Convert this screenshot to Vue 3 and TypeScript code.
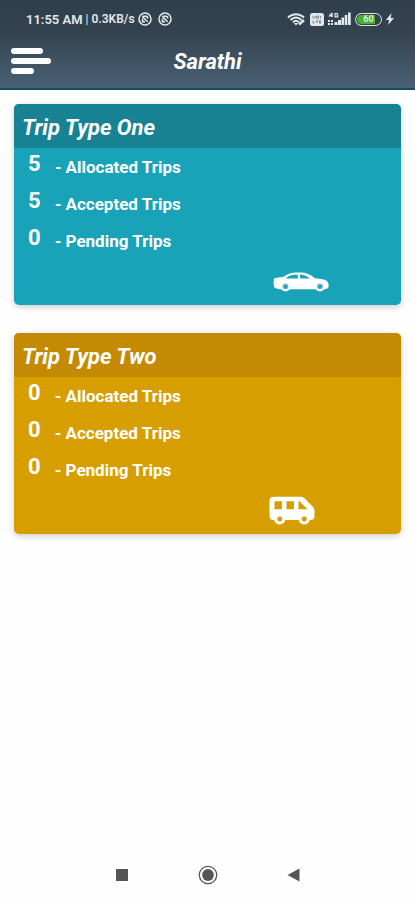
<script setup lang="ts">
interface TripCard {
  id: string
  title: string
  vehicle: 'car' | 'van'
  rows: { count: number; label: string }[]
}

const cards: TripCard[] = [
  {
    id: 'one',
    title: 'Trip Type One',
    vehicle: 'car',
    rows: [
      { count: 5, label: 'Allocated Trips' },
      { count: 5, label: 'Accepted Trips' },
      { count: 0, label: 'Pending Trips' },
    ],
  },
  {
    id: 'two',
    title: 'Trip Type Two',
    vehicle: 'van',
    rows: [
      { count: 0, label: 'Allocated Trips' },
      { count: 0, label: 'Accepted Trips' },
      { count: 0, label: 'Pending Trips' },
    ],
  },
]
</script>

<template>
  <div class="screen">
    <header class="top">
      <div class="status">
        <div class="status-group">
          <span class="time">11:55 AM</span>
          <span class="divider">|</span>
          <span class="speed">0.3KB/s</span>
          <svg v-for="n in 2" :key="n" class="round" viewBox="0 0 14 14" aria-hidden="true">
            <circle cx="7" cy="7" r="6" fill="none" stroke="currentColor" stroke-width="1.500" />
            <path d="M4.500 4.200h3.500a1.800 1.800 0 0 1 1.500 2.400M4.300 4.500l5.300 5.300M4.500 6.800v3h2.500" fill="none" stroke="currentColor" stroke-width="1.600" />
          </svg>
        </div>
        <div class="status-group right">
          <svg class="wifi" viewBox="0 0 19 14" aria-hidden="true">
            <path d="M1 5.500C5.500 1 12.500 1 17 5.500M3.500 8C7 4.500 11 4.500 14.500 8M6 10.300c2-2 4-2 6 0" fill="none" stroke="currentColor" stroke-width="2" />
            <path d="M9 13.500l-2.200-2.400h4.400z" fill="currentColor" />
            <path d="M12 12.500l5-4.500" stroke="currentColor" stroke-width="2.500" />
          </svg>
          <svg class="volte" viewBox="0 0 14 13" aria-hidden="true">
            <rect width="14" height="13" rx="2.500" fill="currentColor" />
            <path d="M3 3v1.500l1 1 1-1V3M6.500 3h2v2.300h-2zM10.500 3v2.500M3 7.500V10h1.700M6 7.800h2M7 7.800V10M11 7.800H9.500V10H11M9.500 9H11" fill="none" stroke="#66727d" stroke-width=".8" />
          </svg>
          <svg class="signal" viewBox="0 0 23 14" aria-hidden="true">
            <path d="M4 1v4M4 1L1.500 4H5M10 1.500H7v3.300h2.700V3.200H8.500" fill="none" stroke="currentColor" stroke-width="1.200" />
            <path d="M0 8h2v2H0zM3 8h2v2H3zM0 11h2v2H0zM3 11h2v2H3zM6.500 10h3v3h-3zM10 8h3v5h-3zM13.500 5.500h2.500V13h-2.500zM16.700 3h2.600v10h-2.600zM20 .5h2.700V13H20z" fill="currentColor" />
          </svg>
          <span class="battery">60</span>
          <svg class="bolt" viewBox="0 0 8 12" aria-hidden="true">
            <path d="M5.500 0L0 7h3.200L2 12l6-7H4.700z" fill="currentColor" />
          </svg>
        </div>
      </div>
      <div class="bar">
        <button class="menu" type="button" aria-label="Menu">
          <span class="line medium"></span>
          <span class="line long"></span>
          <span class="line short"></span>
        </button>
        <h1 class="app-title">Sarathi</h1>
      </div>
    </header>

    <main class="cards">
      <section v-for="card in cards" :key="card.id" class="card" :class="card.vehicle">
        <h2 class="card-title">{{ card.title }}</h2>
        <ul class="rows">
          <li v-for="row in card.rows" :key="row.label" class="row">
            <span class="count">{{ row.count }}</span>
            <span class="label">- {{ row.label }}</span>
          </li>
        </ul>
        <div class="vehicle">
          <svg v-if="card.vehicle === 'car'" class="car-icon" viewBox="0 0 56 20" aria-hidden="true">
            <path fill="currentColor" fill-rule="evenodd" d="M1 6.500Q5 5.300 10 5Q17 .6 23 .6H28Q35 .6 42 6.300Q51 7 54 9Q56 11 55.500 15Q55 17 51 17.300H8Q3 17 1 15Q0 11 1 6.500ZM13.500 5.500Q17 2.400 24.500 2.400L25 6.600H15Q12.500 6.600 13.500 5.500ZM26.500 2.400Q32 2.300 37 6.600H27.500Z" />
            <g fill="#7fc4d2" stroke="currentColor" stroke-width="2">
              <circle cx="12.500" cy="14.500" r="4" />
              <circle cx="47" cy="14.500" r="4" />
            </g>
            <circle cx="12.500" cy="14.500" r="2" fill="#369fb3" />
            <circle cx="47" cy="14.500" r="2" fill="#369fb3" />
          </svg>
          <svg v-else class="van-icon" viewBox="0 0 46 30" aria-hidden="true">
            <path fill="currentColor" fill-rule="evenodd" d="M4.500 .8H32Q34 .8 35.500 2.300L44 11Q45.500 12.500 45.500 15V20Q45.500 24 41.500 24H40.800A5.700 5.700 0 0 1 29.700 24H16.300A5.700 5.700 0 0 1 5.200 24H4.500Q.5 24 .5 20V4.800Q.5 .8 4.500 .8ZM5.500 5.200V13.200H13V5.200ZM17.500 5.200V13.200H25V5.200ZM29.500 5.200V13.200H38.500L30.500 5.200ZM10.800 20.600A2.500 2.500 0 1 0 10.810 20.600ZM35.200 20.600A2.500 2.500 0 1 0 35.210 20.600Z" />
          </svg>
        </div>
      </section>
    </main>

    <nav class="system-nav" aria-label="System">
      <button type="button" aria-label="Recent apps">
        <svg viewBox="0 0 20 20" aria-hidden="true"><rect x="4" y="4" width="12" height="12" fill="currentColor" /></svg>
      </button>
      <button type="button" aria-label="Home">
        <svg viewBox="0 0 20 20" aria-hidden="true">
          <circle cx="10" cy="10" r="8.700" fill="none" stroke="currentColor" stroke-width="1.300" />
          <circle cx="10" cy="10" r="5.900" fill="currentColor" />
        </svg>
      </button>
      <button type="button" aria-label="Back">
        <svg viewBox="0 0 20 20" aria-hidden="true"><path d="M3.500 10L15.500 3.500v13z" fill="currentColor" /></svg>
      </button>
    </nav>
  </div>
</template>

<style>
body {
  margin: 0;
  background: #fefefe;
}
</style>

<style scoped>
.screen {
  display: flex;
  flex-direction: column;
  min-height: 100vh;
  font-family: Roboto, "Liberation Sans", sans-serif;
  font-weight: 700;
  color: #fff;
}

.top {
  border-bottom: 2px solid #154c68;
  background: linear-gradient(#2f3f4c, #34424f 35%, #496174);
}

.status {
  display: flex;
  align-items: center;
  justify-content: space-between;
  height: 38px;
  padding: 0 21px 0 26px;
  color: #e3e8ec;
}

.status-group {
  display: flex;
  align-items: center;
  gap: 3px;
}

.right {
  gap: 4px;
}

.time {
  font-size: 13px;
  font-weight: 600;
}

.divider {
  font-size: 12px;
  font-weight: 400;
}

.speed {
  font-size: 12px;
  font-weight: 600;
}

.round {
  width: 14px;
  height: 14px;
  margin-right: 3px;
}

.wifi {
  width: 19px;
  height: 14px;
}

.volte {
  width: 14px;
  height: 13px;
}

.signal {
  width: 23px;
  height: 14px;
}

.battery {
  box-sizing: border-box;
  width: 27px;
  height: 13px;
  border: 1px solid #e3e8ec;
  border-radius: 7px;
  background: linear-gradient(90deg, #45b02a 75%, #34424f 75%);
  box-shadow: inset 0 0 0 1px #34424f;
  font-size: 9px;
  line-height: 11px;
  text-align: center;
}

.bolt {
  width: 8px;
  height: 12px;
}

.bar {
  display: grid;
  grid-template-columns: 1fr auto 1fr;
  align-items: center;
  height: 46px;
  padding: 0 11px 4px;
}

.menu {
  display: flex;
  flex-direction: column;
  justify-self: start;
  gap: 4px;
  padding: 0;
  border: 0;
  background: none;
}

.line {
  height: 6px;
  border-radius: 3px;
  background: #fff;
}

.medium {
  width: 32px;
}

.long {
  width: 40px;
}

.short {
  width: 23px;
}

.app-title,
.card-title {
  margin: 0;
  font-size: 22px;
  font-style: italic;
  font-weight: 700;
}

.cards {
  display: flex;
  flex: 1;
  flex-direction: column;
  gap: 28px;
  padding: 14px;
}

.card {
  overflow: hidden;
  border-radius: 5px;
  box-shadow: 0 2px 6px #0003;
}

.car {
  background: #19a3b9;
}

.van {
  background: #d79e00;
}

.card-title {
  padding: 4px 8px 0;
  line-height: 40px;
}

.car .card-title {
  background: #168293;
}

.van .card-title {
  background: #c48a03;
}

.rows {
  margin: 0;
  padding: 0 14px;
  list-style: none;
}

.row {
  display: flex;
  gap: 14px;
  height: 37px;
}

.count {
  font-size: 22px;
  line-height: 32px;
}

.label {
  font-size: 17px;
  line-height: 38px;
}

.vehicle {
  display: flex;
  align-items: center;
  justify-content: flex-end;
  height: 46px;
  padding-right: 72px;
}

.van .vehicle {
  padding-right: 86px;
}

.car-icon {
  width: 56px;
  height: 20px;
}

.van-icon {
  width: 46px;
  height: 30px;
}

.system-nav {
  display: flex;
  justify-content: center;
  gap: 66px;
  padding: 15px 0;
}

.system-nav button {
  width: 20px;
  height: 20px;
  padding: 0;
  border: 0;
  background: none;
  color: #555;
}

.system-nav svg {
  display: block;
  width: 20px;
  height: 20px;
}
</style>
